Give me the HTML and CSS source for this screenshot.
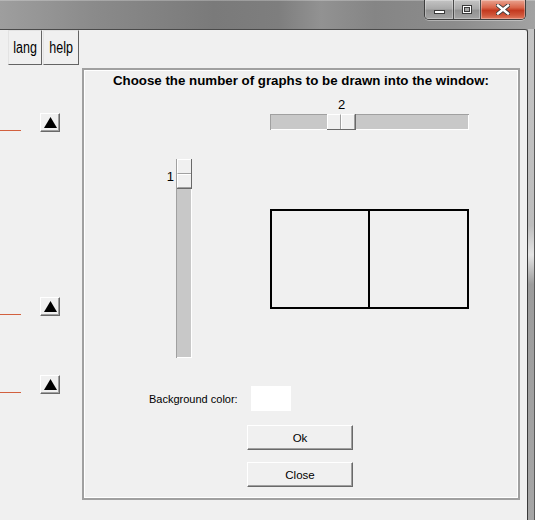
FILE: index.html
```html
<!DOCTYPE html>
<html>
<head>
<meta charset="utf-8">
<link rel="stylesheet" href="styles.css">
</head>
<body>
<div class="window">
  <div class="titlebar">
    <div class="caption">
      <div class="cap-btn cap-min"><span class="min-glyph"></span></div>
      <div class="cap-btn cap-max"><span class="max-glyph"></span></div>
      <div class="cap-btn cap-close">
        <svg width="14" height="11" viewBox="0 0 14 11"><path d="M2 1.5 L12 9.5 M12 1.5 L2 9.5" stroke="#3a3a3a" stroke-width="4.2" stroke-linecap="square"/><path d="M2 1.5 L12 9.5 M12 1.5 L2 9.5" stroke="#ffffff" stroke-width="2.4" stroke-linecap="square"/></svg>
      </div>
    </div>
  </div>
  <div class="main">
    <div class="client">
      <div class="menubar">
        <button class="menu-btn lang"><span class="menu-text">lang</span></button>
        <button class="menu-btn help"><span class="menu-text">help</span></button>
      </div>
      <div class="content">
        <div class="side">
          <div class="side-item s1"><span class="redline"></span><button class="arrow-btn"><svg width="13" height="11" viewBox="0 0 13 11"><path d="M6.5 0 L13 11 L0 11 Z" fill="#000"/></svg></button></div>
          <div class="side-item s2"><span class="redline"></span><button class="arrow-btn"><svg width="13" height="11" viewBox="0 0 13 11"><path d="M6.5 0 L13 11 L0 11 Z" fill="#000"/></svg></button></div>
          <div class="side-item s3"><span class="redline"></span><button class="arrow-btn"><svg width="13" height="11" viewBox="0 0 13 11"><path d="M6.5 0 L13 11 L0 11 Z" fill="#000"/></svg></button></div>
        </div>
        <div class="panel">
          <div class="title">Choose the number of graphs to be drawn into the window:</div>
          <div class="hs-wrap">
            <div class="hs-value">2</div>
            <div class="hs-track">
              <div class="hs-thumb"><span class="cell"></span><span class="cell"></span></div>
            </div>
          </div>
          <div class="mid">
            <div class="vs-group">
              <div class="vs-value">1</div>
              <div class="vs-track">
                <div class="vs-thumb"><span class="cell"></span><span class="cell"></span></div>
              </div>
            </div>
            <div class="graph">
              <div class="g-cell g-left"></div>
              <div class="g-cell g-right"></div>
            </div>
          </div>
          <div class="bg-row">
            <span class="bg-label">Background color:</span>
            <span class="swatch"></span>
          </div>
          <button class="dlg-btn ok">Ok</button>
          <button class="dlg-btn close">Close</button>
        </div>
      </div>
    </div>
    <div class="frame-r"></div>
  </div>
</div>
</body>
</html>
```

FILE: styles.css
```css
* { box-sizing: border-box; }
html, body { margin: 0; padding: 0; }
body {
  background: #f0f0f0;
  font-family: "Liberation Sans", Arial, sans-serif;
  color: #000;
}
.window {
  width: 535px;
  height: 520px;
  overflow: hidden;
  display: flex;
  flex-direction: column;
  background: linear-gradient(90deg, #9e9e9e 0%, #8a8a8a 18%, #7a7a7a 40%, #7e7e7e 52%, #929292 60%, #858585 70%, #8c8c8c 85%, #a2a2a2 100%);
}
.titlebar {
  height: 29px;
  flex: none;
  display: flex;
  justify-content: flex-end;
  align-items: flex-start;
  padding-right: 9px;
  box-shadow: inset 0 1px 0 rgba(255,255,255,0.25);
}
.caption {
  display: flex;
  height: 20px;
  border: 1px solid #3e3e3e;
  border-top: none;
  border-radius: 0 0 5px 5px;
  overflow: hidden;
  box-shadow: 0 1px 0 rgba(255,255,255,0.35);
}
.cap-btn {
  height: 19px;
  display: flex;
  align-items: center;
  justify-content: center;
  background: linear-gradient(180deg, #c4c4c4 0%, #aaaaaa 45%, #929292 55%, #a4a4a4 100%);
  box-shadow: inset 0 0 0 1px rgba(255,255,255,0.3);
}
.cap-min { width: 28px; }
.cap-max { width: 27px; border-left: 1px solid #4a4a4a; }
.cap-close {
  width: 45px;
  border-left: 1px solid #4a4a4a;
  background: linear-gradient(180deg, #e9a390 0%, #d9654a 40%, #c3391f 55%, #d0563a 80%, #e07a60 100%);
}
.min-glyph {
  display: block;
  width: 11px;
  height: 4px;
  margin-top: 5px;
  background: #fff;
  border: 1px solid #3a3a3a;
}
.max-glyph {
  display: block;
  width: 10px;
  height: 9px;
  border: 1px solid #3a3a3a;
  box-shadow: inset 0 0 0 1px #fff, inset 0 0 0 2px #3a3a3a;
  background: #a8a8a8;
}
.cap-close svg { display: block; }

.main {
  flex: 1;
  display: flex;
}
.client {
  width: 528px;
  height: 491px;
  border-top: 1px solid #4a4a4a;
  border-right: 1px solid #3a3a3a;
  border-top-right-radius: 3px;
  background: #f0f0f0;
  display: flex;
  flex-direction: column;
}
.frame-r {
  width: 7px;
  background: linear-gradient(180deg, #c4c4c4 0%, #bdbdbd 40%, #e4e4e4 46%, #9c9c9c 52%, #a6a6a6 100%);
  border-right: 1px solid #5a5a5a;
}
.menubar {
  display: flex;
  gap: 1px;
  padding-left: 8px;
  height: 35px;
}
button {
  font-family: inherit;
  padding: 0;
  margin: 0;
  background: #f0f0f0;
  color: #000;
  border-style: solid;
  border-width: 1px;
  border-color: #ffffff #696969 #696969 #ffffff;
  box-shadow: inset -1px -1px 0 #a0a0a0;
  cursor: default;
}
.menu-btn {
  height: 35px;
  font-size: 16px;
  border-color: #e3e3e3 #646464 #646464 #e3e3e3;
  box-shadow: none;
  display: flex;
  align-items: center;
  justify-content: center;
}
.menu-text {
  display: inline-block;
  transform: scaleX(0.78);
}
.menu-btn.lang { width: 34px; }
.menu-btn.help { width: 36px; }

.content {
  display: flex;
  margin-top: 3px;
}
.side {
  width: 82px;
  display: flex;
  flex-direction: column;
}
.side-item {
  display: flex;
  align-items: flex-start;
}
.s1 { margin-top: 45px; }
.s2 { margin-top: 165px; }
.s3 { margin-top: 59px; }
.redline {
  width: 21px;
  height: 1px;
  margin-top: 17px;
  background: #d2603e;
}
.arrow-btn {
  margin-left: 19px;
  width: 20px;
  height: 19px;
  display: flex;
  align-items: flex-start;
  justify-content: center;
  padding-top: 3px;
}
.arrow-btn svg { display: block; }

.panel {
  width: 438px;
  height: 432px;
  border: 2px solid #a0a0a0;
  box-shadow: inset 0 0 0 1px #ffffff;
  display: flex;
  flex-direction: column;
  align-items: flex-start;
}
.title {
  align-self: stretch;
  margin-top: 3px;
  text-align: center;
  font-weight: bold;
  font-size: 13.3px;
  line-height: 16px;
}
.hs-wrap {
  margin-left: 186px;
  margin-top: 8px;
  width: 199px;
}
.hs-value {
  margin-left: 57px;
  width: 29px;
  text-align: center;
  font-size: 13px;
  line-height: 15px;
  margin-bottom: 2px;
}
.hs-track {
  height: 16px;
  display: flex;
  background: #c8c8c8;
  box-shadow: inset 1px 1px 0 #a0a0a0, inset -1px -1px 0 #ffffff;
}
.hs-thumb {
  margin-left: 57px;
  width: 29px;
  height: 16px;
  display: flex;
  border-right: 1px solid #696969;
  border-bottom: 1px solid #696969;
}
.hs-thumb .cell {
  flex: 1;
  background: #f0f0f0;
  border-top: 1px solid #fff;
  border-left: 1px solid #fff;
  border-right: 1px solid #a0a0a0;
}
.mid {
  margin-top: 29px;
  display: flex;
  align-items: flex-start;
}
.vs-group {
  margin-left: 82px;
  display: flex;
  align-items: flex-start;
}
.vs-value {
  width: 8px;
  margin-top: 10px;
  margin-right: 2px;
  text-align: right;
  font-size: 13px;
  line-height: 15px;
}
.vs-track {
  width: 16px;
  height: 199px;
  padding-left: 1px;
  background: #c8c8c8;
  box-shadow: inset 1px 1px 0 #a0a0a0, inset -1px -1px 0 #ffffff;
}
.vs-thumb {
  width: 15px;
  height: 30px;
  display: flex;
  flex-direction: column;
  border-right: 1px solid #696969;
  border-bottom: 1px solid #696969;
}
.vs-thumb .cell {
  flex: 1;
  background: #f0f0f0;
  border-top: 1px solid #fff;
  border-left: 1px solid #fff;
  border-bottom: 1px solid #a0a0a0;
}
.graph {
  margin-left: 78px;
  margin-top: 50px;
  width: 199px;
  height: 100px;
  border: 2px solid #000;
  display: flex;
}
.g-left { width: 96px; }
.g-right { flex: 1; border-left: 2px solid #000; }
.bg-row {
  margin-top: 28px;
  margin-left: 65px;
  display: flex;
  align-items: center;
}
.bg-label {
  width: 102px;
  font-size: 11px;
  line-height: 14px;
}
.swatch {
  width: 40px;
  height: 25px;
  background: #ffffff;
}
.dlg-btn {
  margin-left: 163px;
  width: 106px;
  height: 25px;
  font-size: 11.5px;
}
.dlg-btn.ok { margin-top: 14px; }
.dlg-btn.close { margin-top: 12px; }
```
